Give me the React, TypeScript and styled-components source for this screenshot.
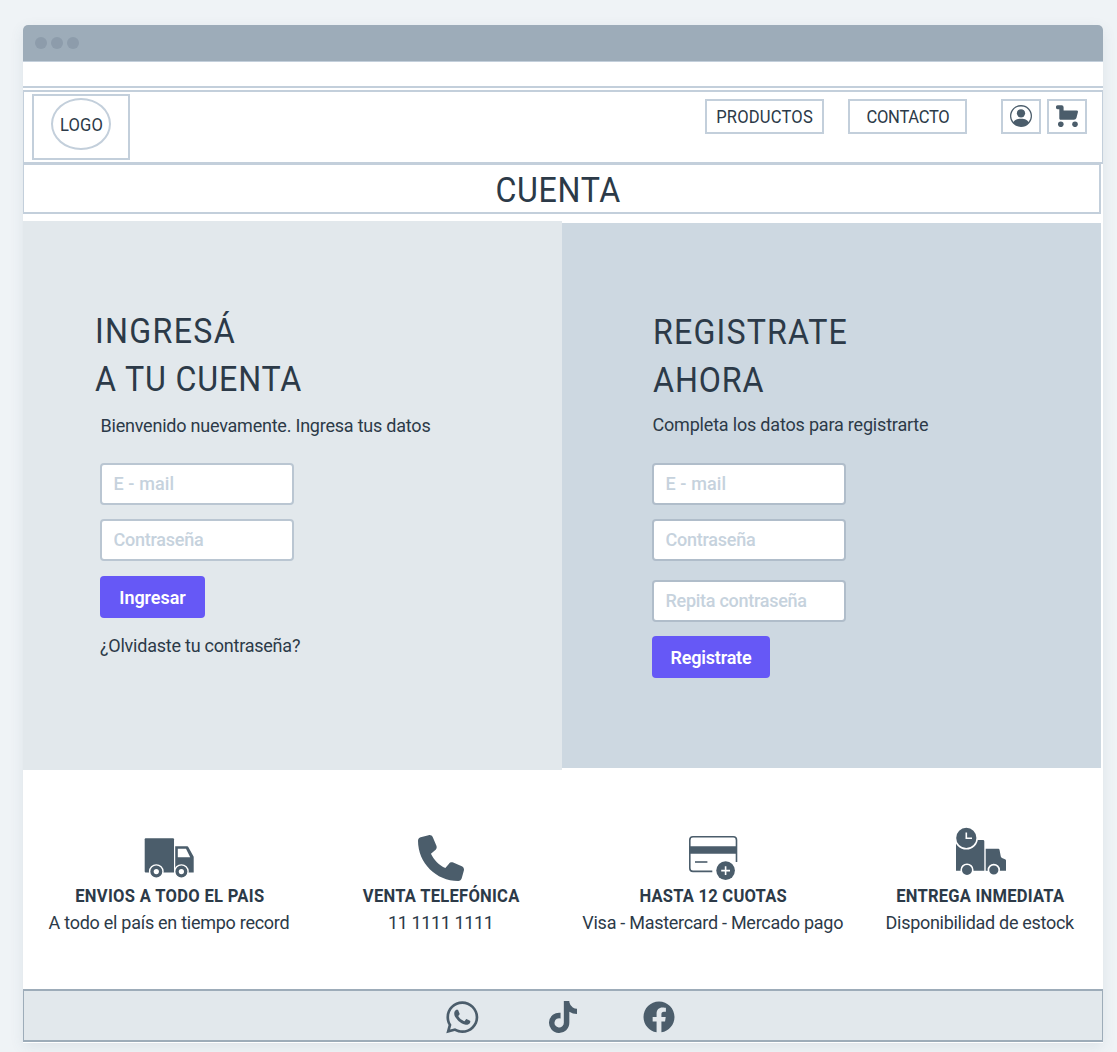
import React from "react";
import styled, { createGlobalStyle } from "styled-components";
import { BsPersonCircle } from "react-icons/bs";
import { FaFacebook, FaTiktok, FaWhatsapp } from "react-icons/fa";

const color = {
  page: "#eff3f6",
  bar: "#9dacb9",
  dot: "#8d9cab",
  line: "#c3cfdb",
  ink: "#2c3a48",
  icon: "#4b5d6b",
  mist: "#e2e8ec",
  steel: "#cdd8e1",
  field: "#b0bdca",
  hint: "#c6d2dd",
  accent: "#6658f6",
};

const GlobalStyle = createGlobalStyle`
  *, *::before, *::after { box-sizing: border-box; }
  body {
    margin: 0;
    background: ${color.page};
    color: ${color.ink};
    font: 400 18px/24px Roboto, "Liberation Sans", sans-serif;
  }
  h1, h2, h3, p { margin: 0; font-weight: 400; }
  svg { display: block; flex: none; }
`;

/* Capitals are set slightly narrower than the text face. */
const Caps = styled.span<{ $track: number }>`
  display: inline-block;
  transform: scaleX(0.92);
  letter-spacing: ${(p) => p.$track}px;
  white-space: nowrap;
`;

const Page = styled.div`
  height: 1052px;
  padding: 25px 14px 0 23px;
  overflow: hidden;
`;

const Window = styled.div`
  width: 1080px;
  height: 1018px;
  background: #fff;
  border-radius: 5px 5px 0 0;
  box-shadow: 0 4px 14px rgba(70, 95, 120, 0.1);
`;

const TitleBar = styled.div`
  display: flex;
  align-items: center;
  gap: 4px;
  height: 37px;
  padding-left: 12px;
  background: ${color.bar};
  border-bottom: 1px solid ${color.line};
  border-radius: 5px 5px 0 0;
`;

const Dot = styled.span`
  width: 12px;
  height: 12px;
  border-radius: 50%;
  background: ${color.dot};
`;

const Strip = styled.div`
  height: 26px;
  border-bottom: 2px solid ${color.line};
`;

const Header = styled.header`
  display: flex;
  align-items: flex-start;
  height: 74px;
  margin-top: 2px;
  padding: 2px 15px 0 8px;
  border: solid ${color.line};
  border-width: 2px 1px;
`;

const LogoBox = styled.div`
  display: flex;
  justify-content: center;
  width: 98px;
  height: 66px;
  margin-right: auto;
  padding-top: 2px;
  border: 2px solid ${color.line};
`;

const Logo = styled.div`
  display: flex;
  align-items: center;
  justify-content: center;
  width: 60px;
  height: 52px;
  padding: 2px 0 0 1px;
  border: 2px solid ${color.line};
  border-radius: 50%;
`;

const NavLink = styled.a`
  display: flex;
  align-items: center;
  justify-content: center;
  width: 119px;
  height: 35px;
  margin: 5px 24px 0 0;
  border: 2px solid ${color.line};
`;

const IconLinks = styled.div`
  display: flex;
  gap: 6px;
  margin: 5px 0 0 10px;
`;

const IconLink = styled.a`
  display: flex;
  align-items: center;
  justify-content: center;
  width: 40px;
  height: 35px;
  padding-bottom: 1px;
  border: 2px solid ${color.line};
  color: ${color.icon};
`;

const PageTitle = styled.h1`
  width: 1078px;
  height: 51px;
  margin-top: -1px;
  padding-right: 6px;
  border: solid ${color.line};
  border-width: 2px 2px 2px 1px;
  font-size: 35px;
  line-height: 51px;
  text-align: center;
`;

const Panels = styled.main`
  display: flex;
  align-items: center;
  height: 549px;
  margin-top: 7px;
`;

const LoginPanel = styled.form`
  width: 539px;
  height: 549px;
  padding: 87px 0 0 77px;
  background: ${color.mist};
`;

const RegisterPanel = styled.form`
  width: 539px;
  height: 545px;
  padding: 86px 0 0 90px;
  background: ${color.steel};
`;

const Heading = styled.h2<{ $indent?: number }>`
  display: flex;
  flex-direction: column;
  align-items: flex-start;
  margin-left: ${(p) => p.$indent ?? 0}px;
  font-size: 35px;
  line-height: 48px;

  ${Caps} {
    transform-origin: left;
  }
`;

const Lead = styled.p<{ $track: number; $top: number; $bottom: number }>`
  margin: ${(p) => p.$top}px 0 ${(p) => p.$bottom}px 0.5px;
  letter-spacing: ${(p) => p.$track}px;
`;

const Field = styled.input<{ $track: number; $gap?: number; $border?: string }>`
  display: block;
  width: 194px;
  height: 42px;
  margin: 0 0 ${(p) => p.$gap ?? 14}px;
  padding: 0 11px 1px 11.5px;
  background: #fff;
  border: 2px solid ${(p) => p.$border ?? color.field};
  border-radius: 4px;
  font: inherit;
  font-weight: 500;
  &::placeholder {
    color: ${color.hint};
    opacity: 1;
    letter-spacing: ${(p) => p.$track}px;
  }
`;

const Submit = styled.button<{ $width: number; $track: number }>`
  display: block;
  width: ${(p) => p.$width}px;
  height: 42px;
  padding: 1px 0 0;
  border: 0;
  border-radius: 4px;
  background: ${color.accent};
  color: #fff;
  font: inherit;
  font-weight: 600;
  letter-spacing: ${(p) => p.$track}px;
`;

const ForgotLink = styled.a`
  display: block;
  margin-top: 16px;
  letter-spacing: -0.23px;
`;

const Features = styled.section`
  display: grid;
  grid-template-columns: 271.5px 272px 272px 262px;
  height: 219px;
  padding: 53px 0 0 11px;
  overflow: hidden;
`;

const Feature = styled.div`
  display: flex;
  flex-direction: column;
  align-items: center;
  line-height: 27px;
`;

const FeatureIcon = styled.div`
  display: flex;
  align-items: flex-end;
  height: 59px;
  color: ${color.icon};

  ${Feature}:not(:last-child) & {
    margin-right: 2px;
  }
`;

const FeatureTitle = styled.h3`
  font-size: 18px;
  font-weight: 700;
`;

const FeatureText = styled.p<{ $track: number }>`
  margin-right: 1.5px;
  letter-spacing: ${(p) => p.$track}px;
  white-space: nowrap;
`;

const Footer = styled.footer`
  display: flex;
  align-items: center;
  justify-content: center;
  gap: 64px;
  height: 53px;
  padding: 3px 5px 0 0;
  background: ${color.mist};
  border: solid ${color.bar};
  border-width: 2px 1px;
  color: ${color.icon};
`;

const SocialSlot = styled.a<{ $after?: number }>`
  display: flex;
  justify-content: center;
  width: 32px;
  margin-right: ${(p) => p.$after ?? 0}px;
`;

const CartIcon = () => (
  <svg width="22" height="22" viewBox="0 0 22 22" fill="currentColor">
    <path d="M1.9 .2H5.6Q7.6 .2 7.6 2.2V5.5H20.7Q22.3 5.6 21.9 7.2L20.4 13Q19.8 14.7 18 14.7H4.2Q3.3 14.7 3.3 13.6V4.2H1.9A2 2 0 0 1 1.9 .2Z" />
    <circle cx="4.8" cy="19.3" r="2.8" />
    <circle cx="19" cy="19.3" r="2.8" />
  </svg>
);

const TruckIcon = () => (
  <svg width="50" height="45" viewBox="0 0 50 45" fill="currentColor">
    <path d="M1.7 1.3H29Q30 1.3 30 2.3V35.5H1.7Q.7 35.5 .7 34.5V2.3Q.7 1.3 1.7 1.3Z" />
    <path
      fillRule="evenodd"
      d="M31.2 9.2H43.2Q44 9.2 44.3 10L49.7 19.7V35.5H31.2ZM33.8 11.7V20.3H46.2L42 11.7Z"
    />
    <g stroke="#fff" strokeWidth="1.4">
      <circle cx="12.3" cy="34.6" r="6.7" />
      <circle cx="37.4" cy="34.6" r="6.7" />
    </g>
    <g fill="#fff">
      <circle cx="12.3" cy="34.6" r="2.6" />
      <circle cx="37.4" cy="34.6" r="2.6" />
    </g>
  </svg>
);

const PhoneIcon = () => (
  <svg width="46" height="47" viewBox="0 0 512 523" fill="currentColor">
    <path d="M164.9 24.6c-7.7-18.6-28-28.5-47.4-23.2l-88 24C12.1 30.2 0 46 0 64C0 311.4 200.6 512 448 512c18 0 33.8-12.1 38.6-29.5l24-88c5.3-19.4-4.6-39.7-23.2-47.4l-96-40c-16.3-6.8-35.2-2.1-46.3 11.6L304.7 368C234.3 334.7 177.3 277.7 144 207.3L193.3 167c13.7-11.2 18.4-30 11.6-46.3l-40-96z" />
  </svg>
);

const CardIcon = () => (
  <svg width="50" height="47" viewBox="0 0 50 47" fill="none" stroke="currentColor" strokeWidth="1.6">
    <path d="M24.3 36.4H5Q1.8 36.4 1.8 33.2V5Q1.8 1.8 5 1.8H45.3Q48.5 1.8 48.5 5V27" />
    <path d="M1.8 15H48.5" strokeWidth="7.4" />
    <path d="M7 27H19.4" />
    <circle cx="37.6" cy="35.6" r="9.3" fill="currentColor" stroke="none" />
    <path d="M33.2 35.6H42M37.6 31.2V40" stroke="#fff" strokeWidth="1.6" />
  </svg>
);

const ExpressTruckIcon = () => (
  <svg width="50" height="55" viewBox="0 0 50 55" fill="currentColor">
    <path d="M0 14H20V13H27Q28.3 13 28.3 14.3V43.7H0Z" />
    <path d="M29.7 21.7H42.4Q43.3 21.7 43.5 22.7L44.8 29.6Q45 30.6 46 31L49 32.2Q50 32.6 50 33.6V43.7H29.7Z" />
    <g stroke="#fff" strokeWidth="1.6">
      <circle cx="10.3" cy="10.9" r="10.9" />
      <circle cx="11" cy="43" r="5.8" />
      <circle cx="37.8" cy="43" r="5.4" />
    </g>
    <path d="M10.3 5.5V11.3H16" fill="none" stroke="#fff" strokeWidth="1.6" />
  </svg>
);

const features = [
  { icon: <TruckIcon />, title: "ENVIOS A TODO EL PAIS", tt: 0.33, text: "A todo el país en tiempo record", st: -0.27 },
  { icon: <PhoneIcon />, title: "VENTA TELEFÓNICA", tt: 0.28, text: "11 1111 1111", st: -0.4 },
  { icon: <CardIcon />, title: "HASTA 12 CUOTAS", tt: 0.24, text: "Visa - Mastercard - Mercado pago", st: -0.28 },
  { icon: <ExpressTruckIcon />, title: "ENTREGA INMEDIATA", tt: 0.24, text: "Disponibilidad de estock", st: -0.3 },
];

export default function App() {
  return (
    <Page>
      <GlobalStyle />
      <Window>
        <TitleBar>
          <Dot />
          <Dot />
          <Dot />
        </TitleBar>
        <Strip />
        <Header>
          <LogoBox>
            <Logo>
              <Caps $track={0.2}>LOGO</Caps>
            </Logo>
          </LogoBox>
          <NavLink>
            <Caps $track={0.2}>PRODUCTOS</Caps>
          </NavLink>
          <NavLink>
            <Caps $track={-0.35}>CONTACTO</Caps>
          </NavLink>
          <IconLinks>
            <IconLink aria-label="Cuenta">
              <BsPersonCircle size={22} />
            </IconLink>
            <IconLink aria-label="Carrito">
              <CartIcon />
            </IconLink>
          </IconLinks>
        </Header>
        <PageTitle>
          <Caps $track={0.7}>CUENTA</Caps>
        </PageTitle>
        <Panels>
          <LoginPanel>
            <Heading $indent={-5.2}>
              <Caps $track={1.4}>INGRESÁ</Caps>
              <Caps $track={0.9}>A TU CUENTA</Caps>
            </Heading>
            <Lead $track={-0.22} $top={10} $bottom={25}>
              Bienvenido nuevamente. Ingresa tus datos
            </Lead>
            <Field type="email" placeholder="E - mail" $track={0.1} $border="#bac6d2" />
            <Field type="password" placeholder="Contraseña" $track={-0.25} $gap={15} $border="#bac6d2" />
            <Submit type="button" $width={105} $track={-0.05}>
              Ingresar
            </Submit>
            <ForgotLink>¿Olvidaste tu contraseña?</ForgotLink>
          </LoginPanel>
          <RegisterPanel>
            <Heading $indent={0.5}>
              <Caps $track={1.25}>REGISTRATE</Caps>
              <Caps $track={0.95}>AHORA</Caps>
            </Heading>
            <Lead $track={-0.19} $top={8} $bottom={26}>
              Completa los datos para registrarte
            </Lead>
            <Field type="email" placeholder="E - mail" $track={0.1} />
            <Field type="password" placeholder="Contraseña" $track={-0.25} $gap={19} />
            <Field type="password" placeholder="Repita contraseña" $track={-0.27} />
            <Submit type="button" $width={118} $track={-0.2}>
              Registrate
            </Submit>
          </RegisterPanel>
        </Panels>
        <Features>
          {features.map((f) => (
            <Feature key={f.title}>
              <FeatureIcon>{f.icon}</FeatureIcon>
              <FeatureTitle>
                <Caps $track={f.tt}>{f.title}</Caps>
              </FeatureTitle>
              <FeatureText $track={f.st}>{f.text}</FeatureText>
            </Feature>
          ))}
        </Features>
        <Footer>
          <SocialSlot $after={5} aria-label="WhatsApp">
            <FaWhatsapp size={36.6} />
          </SocialSlot>
          <SocialSlot aria-label="TikTok">
            <FaTiktok size={32} />
          </SocialSlot>
          <SocialSlot aria-label="Facebook">
            <FaFacebook size={32} />
          </SocialSlot>
        </Footer>
      </Window>
    </Page>
  );
}
